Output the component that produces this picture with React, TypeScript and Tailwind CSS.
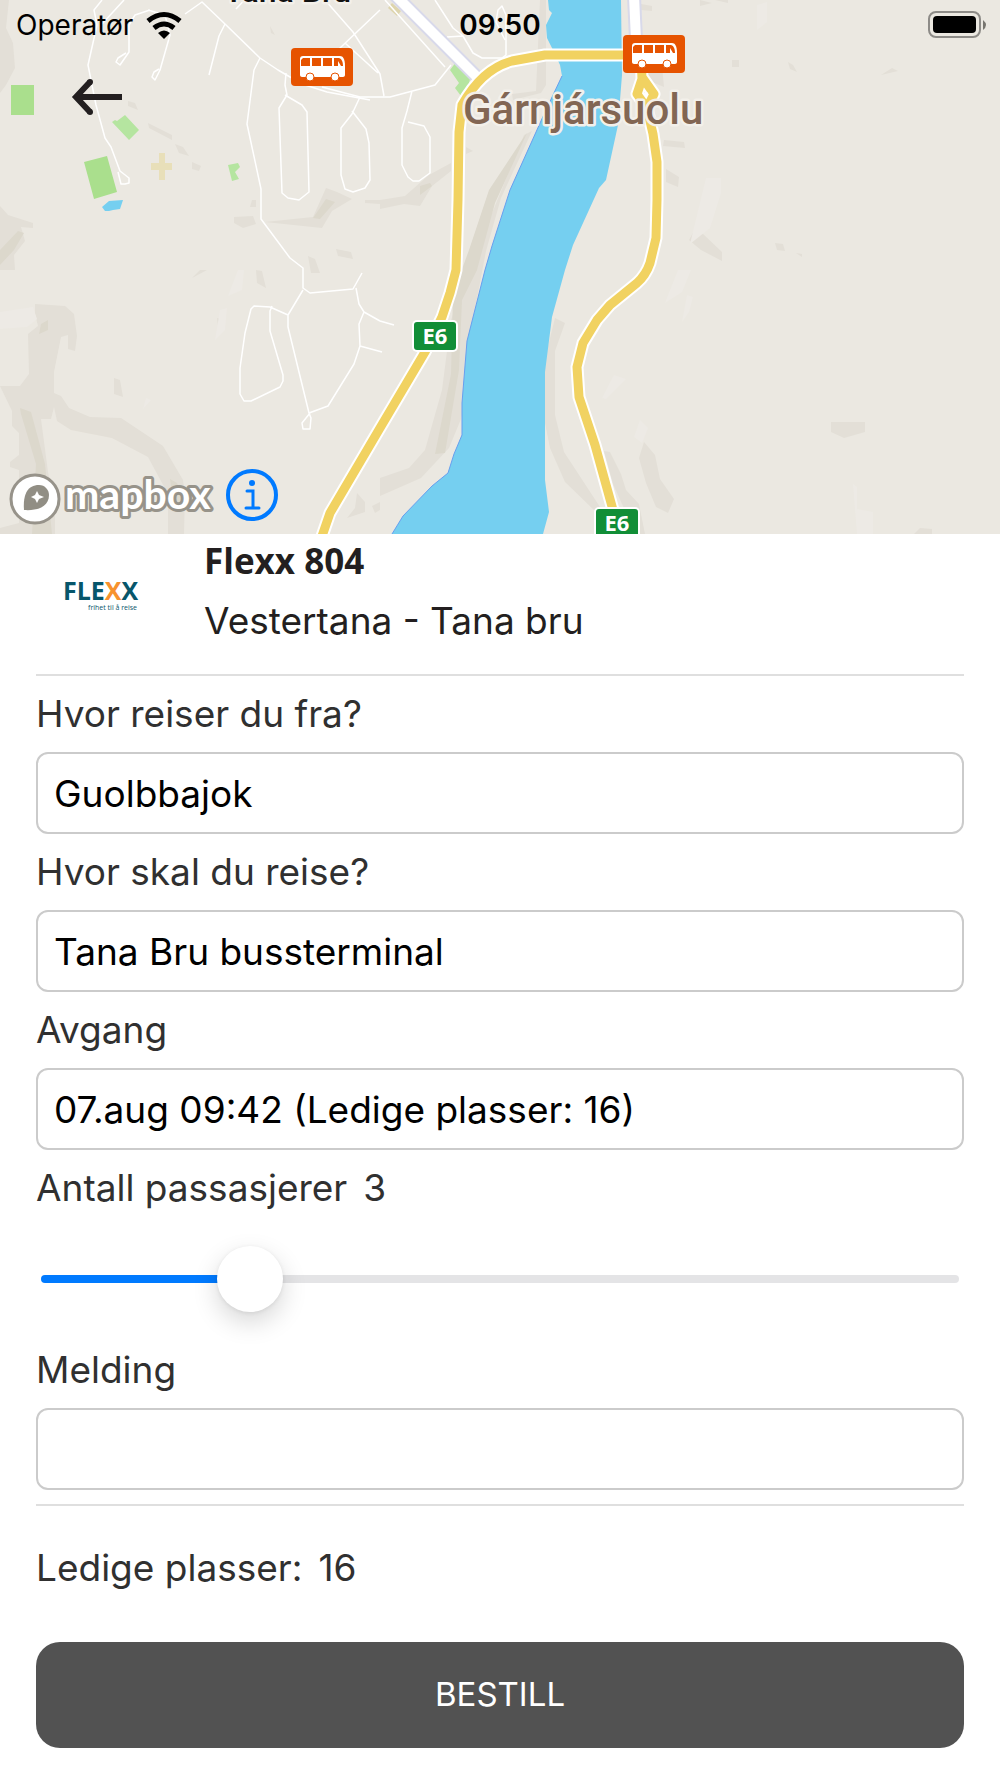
import React, { useState } from 'react';

interface FieldProps {
  id: string;
  label: string;
  value: string;
  onChange: (value: string) => void;
}

const Field: React.FC<FieldProps> = ({ id, label, value, onChange }) => (
  <div className="flex flex-col gap-4">
    <label htmlFor={id} className="leading-[44px]">{label}</label>
    <input
      id={id}
      type="text"
      value={value}
      onChange={(e) => onChange(e.target.value)}
      className="w-full h-[82px] px-4 bg-white text-black border-2 border-[#cbcbcb] rounded-[12px] outline-none focus:border-[#007aff]"
    />
  </div>
);

const BusMarker: React.FC<{ x: number; y: number }> = ({ x, y }) => (
  <g transform={`translate(${x} ${y})`}>
    <rect width="62" height="38" rx="4" fill="#e65300" />
    <path d="M12 8h37c3 0 5 3 5 10v9c0 1-1 2-2 2H11c-1 0-2-1-2-2V11c0-2 1-3 3-3z" fill="#fff" />
    <path d="M12 10h7v8h-9v-6zM21 10h9v8h-9zM32 10h9v8h-9zM43 10h5c3 1 4 4 4 8h-2l-3-5v5h-4z" fill="#e65300" />
    <circle cx="19" cy="29" r="4" fill="#fff" stroke="#e65300" strokeWidth="1" />
    <circle cx="44" cy="29" r="4" fill="#fff" stroke="#e65300" strokeWidth="1" />
  </g>
);

const RoadShield: React.FC<{ x: number; y: number }> = ({ x, y }) => (
  <g transform={`translate(${x} ${y})`}>
    <rect x="-1" y="-1" width="46" height="32" rx="5" fill="#fff" />
    <rect x="1" y="1" width="42" height="28" rx="3" fill="#118e37" />
    <text x="22" y="23" textAnchor="middle" fill="#fff" fontSize="22" fontWeight="700" fontFamily="Open Sans, sans-serif">E6</text>
  </g>
);

const E6_WEST = 'M640 55h-95l-33 6q-30 8-50 44l-3 27-1 68-2 70-6 23-8 24-17 35-45 76-50 85-10 29';
const E6_EAST = 'M641 55l1 24-5 15 10 14 6 26 4 28v38l-1 38-6 25q-4 12-13 20l-27 22-13 15-14 23-6 24 2 30 16 48 18 65M642 77l12 17-7 14';

const MapView: React.FC = () => (
  <svg viewBox="0 0 1000 534" className="block w-full h-auto bg-[#ebe8e1]" role="img" aria-label="Kart">
    {/* Terrain shading */}
    <g fill="#e3dfd7">
      <path d="M0 0h9l-3 28 7 15 2 25-9 17-6 8z" />
      <path d="M0 206l8 9 25 8v5l-12-1 4 14-11 14 1 15H0z" />
      <path d="M35 304l30 2 9 8 3 22-2 15-7-2v-14l-7 2-7 35v21l7 3 8 12 21 9 31 1 42 28 20 34 2 14-1 40h-16v-40l-20-37-36-19-41-8-14-9-3-14-3 12H41l7 53 7 33v29H0v-6l19-5V470l-9-3v-5l9-7v-22l-7-7v-15L0 386h20l9-12-1-40 10-8-3-12z" />
      <path d="M234 217l19-1 3 8-13 4-9-5zM265 222l48-5 13-29 11 4 15 7-20 12-10 17zM365 200h15v4l-15-1zM252 200h4v7h-6zM336 249l15 3 2 7-15-3zM308 256l7 3 5 14h-9z" />
      <path d="M128 101l7 2 3 7-10-4zM148 123l24 12v5l-23-12zM175 144l8 3 6 9-10-3zM192 162l9 4-2 5-7-2zM270 26l5 9-4-2z" />
      <path d="M256 270l6 1 4 17-9-5zM200 270h7l-15 8zM217 318l8 2v5l-7 1zM114 378l6 2 3 17-9-3zM357 493l8 9v10l-18 6 8-10zM372 506l8-4v8l-5 3z" />
      <path d="M380 200l25-4 24-21 22-12v8l-19 15-12 20-16-2-24 5z" />
      <path d="M540 0h6v85l-5 8-28 7-1-6 24-3zM524 135l8-4-31 67-15 53-11 58-6 75-8 35-12 29-28 30-41 18v-18l29-10 16-18 17-60 9-70 30-80z" />
      <path d="M641 4l11 2v5l-11-1zM700 0l12 3-12 3zM715 0h13v3zM732 60h7v7h-7zM788 62l5 3 4 7-7-3zM881 75l11-7 6 3zM664 140l20 2 1 6-22-2zM666 169l13 8-1 10-12-5zM694 231l8 2 20 19v9l-21-11-12-10zM775 243l8 1 2 7-8-1zM796 253l6 1v3z" />
      <path d="M831 422h34v10l-21 6-13-6zM555 318l10 5-10 28v64l9 37 36 55-5 4-30-29-15-34-5-25v-65zM604 451l6 1 11 22 5 16 13 14 6 30h-8l-15-30-9-20zM644 442l11 13 5 24 14 20-6 14-12-6-10-24-7-25zM858 531h7v3h-7zM920 528l12 1v5h-18z" />
      <path d="M634 55h27l3 32-12-5zM466 147l7 4-7 3z" />
    </g>
    <g fill="#dcd8cc">
      <path d="M18 231l6 2-10 17-14 15v-15zM326 199l9 3-15 17-7-1zM20 408l11 4 14 52 7 70H32l4-70-15-50zM170 479l7 4 8 20-12-2zM41 324l7-4v10l-9 4zM420 186l10-3 2 3-12 9z" />
      <path d="M524 137l3-4-32 70-18 67-15 30-3 70-14 83-10 1 16-80 2-80 16-44 20-60z" />
    </g>
    <g fill="#edeae5">
      <path d="M706 178h15v15l-11 35-20 16zM678 270h13l-9 22-17 11zM687 295l6 2-4 15-7 10zM757 5l10-3v20l-10 8zM238 270h6l-2 20-14 6zM614 375l12 4-20 20-4-1zM640 420l8 8-6 15-8-6zM853 484l4 3v22l16 3v22h-16zM220 310l7-2-2 22-10 10zM146 398l5 2-8 9zM0 312l33-5 4 12-10 8-27 2z" />
    </g>

    {/* Parks and ponds */}
    <g fill="#aadf8d">
      <path d="M11 85h23v30H11zM84 162l23-6 10 36-23 7z" />
    </g>
    <g fill="#b5e5a0">
      <path d="M112 122l3-2 2 1 8-6 14 15-10 10zM228 165l10-2 2 4-5 5 4 7-7 2zM456 62l5 6 10 8-4 14-6 6-6-8 4-5-9-13z" />
    </g>
    <path d="M102 207l7-6 14-1-3 9-7 1-4 1h-4z" fill="#75cff0" />
    <path d="M159 153h6v10h7v7h-7v10h-6v-10h-8v-7h8z" fill="#e8dfb9" />
    <path d="M392 3l9 8-4 5-9-8z" fill="#ded5ae" />

    {/* Local streets */}
    <g fill="none" stroke="#fff" strokeWidth="1.5" strokeLinejoin="round">
      <path d="M102 0l-8 10 3 15-9 40 8 40 9 33 6 9 9 24 9 7v5l-4 1h-4l-3-12" />
      <path d="M124 0l-22 24M150 10l-15 5-6 10v27l-9 13-4-3 2-4 8-5M148 10l17 5 5 20-10 35-5 10-3-3 2-5 5-3M185 14l17-12 23 22 35 34 18 12 24 14 25 8 43 8" />
      <path d="M225 24l-6 12-10 39M260 58l-6 12-7 54 14 65v30l29 39 13 10v20l7 5 43-4 9-16M286 73l-1 12 2 10-8 13 3 85 6 5 11 2 10-8-2-80-5-7-17-10M322 87l38 10h30l45-12 16-20M360 97l-8 17-11 14v47l4 14 8 3 12-4 5-8-1-37-3-14-14-18M325 0l28 32 27 42 4 22M380 10l-40 38-18 25M345 43l33 30M236 9l15-16M385 0l60 67M412 91l-5 20-5 17v37l6 12 5 4h6l11-8v-36l-6-11-16-4M435 0l18 28 10 8-16 1M463 36l10 17 9 5h20l4-3V15l-4-9-4 4-2 12 9 18" />
      <path d="M303 290l-15 25v12l21 86 2 5-1 11h-7l-1-6 8-10M309 413l19-7 26-42 6-18-1-22 5-12-5-8-3-16M364 312l16 9M360 346l22 6M288 315l-18-8-16-1-3 3-6 24-5 35v26l4 7h7l29-14 3-6v-6l-13-44v-20l2-5M380 321l14 4" />
    </g>

    {/* River */}
    <path
      d="M548 0l1 10 3 3-6 12 1 13 6 12 7 15 2 11-17 36-35 78-18 56-7 24-18 71-5 62v32l-8 19-6 19-16 13-29 30-11 18h151l6-22-4-32V372l7-55 13-47 8-25 26-57 7-8 12-55 4-50-1-75z"
      fill="#75cff0"
    />
    <path d="M562 76l-17 36-35 78-18 56-7 24-18 71-5 62v32l-8 19-6 19-16 13-29 30-11 18" fill="none" stroke="#679fef" />

    {/* Main roads */}
    <g fill="none" strokeLinejoin="round">
      <path d="M394-6l84 84M634-4l2 44" stroke="#d8d9ea" strokeWidth="14" />
      <path d="M394-6l84 84M634-4l2 44" stroke="#fff" strokeWidth="10" />
      <path d={E6_WEST} stroke="#fff" strokeWidth="13" />
      <path d={E6_EAST} stroke="#fff" strokeWidth="13" />
      <path d={E6_WEST} stroke="#f1d261" strokeWidth="9" />
      <path d={E6_EAST} stroke="#f1d261" strokeWidth="9" />
    </g>
    <circle cx="646" cy="94" r="2" fill="#fff" />

    <RoadShield x={413} y={321} />
    <RoadShield x={595} y={508} />

    <g stroke="#f3f0ea" strokeWidth="5" strokeLinejoin="round" paintOrder="stroke" fontFamily="Roboto, sans-serif">
      <text x="224" y="2" fontSize="32" fill="#111" fontWeight="500">Tana Bru</text>
      <text x="463" y="124" fontSize="42" fill="#826653" fontWeight="500">Gárnjársuolu</text>
    </g>

    <BusMarker x={291} y={48} />
    <BusMarker x={623} y={35} />

    {/* Mapbox attribution */}
    <circle cx="35" cy="499" r="24" fill="#fff" stroke="#97938a" strokeWidth="3" />
    <path d="M24 510c-1-13 2-25 15-25 6 0 10 5 10 10 0 12-12 16-25 15z" fill="#918e84" />
    <path d="M37 491l2 4 5 2-5 2-2 4-2-4-4-2 4-2z" fill="#fff" />
    <text x="65" y="509" fontSize="41" fontWeight="700" fontFamily="Lato, sans-serif" fill="#fff" stroke="#97938a" strokeWidth="6" strokeLinejoin="round" paintOrder="stroke">mapbox</text>
  </svg>
);

const StatusBar: React.FC = () => (
  <div className="grid grid-cols-3 items-center h-[50px] px-4 text-[28px] text-black">
    <div className="flex items-center gap-3">
      <span>Operatør</span>
      <svg width="38" height="28" viewBox="0 0 38 28" aria-label="Wi-Fi">
        <path d="M3 10q16-13 32 0M9 17q10-8 20 0" fill="none" stroke="#000" strokeWidth="5" />
        <path d="M13 22q6-5 12 0l-6 6z" fill="#000" />
      </svg>
    </div>
    <span className="text-center font-semibold">09:50</span>
    <svg className="justify-self-end" width="56" height="28" viewBox="0 0 56 28" aria-label="Batteri" overflow="visible">
      <rect x="1" y="1" width="51" height="25" rx="7" fill="none" stroke="#8d8b87" strokeWidth="2" />
      <rect x="5" y="5" width="43" height="17" rx="4" fill="#000" />
      <path d="M55 9q6 5 0 10z" fill="#77756f" />
    </svg>
  </div>
);

export default function App() {
  const [from, setFrom] = useState('Guolbbajok');
  const [to, setTo] = useState('Tana Bru bussterminal');
  const [departure, setDeparture] = useState('07.aug 09:42 (Ledige plasser: 16)');
  const [message, setMessage] = useState('');
  const [amount, setAmount] = useState(3.1);

  const maxPassengers = 15;
  const filled = (amount / maxPassengers) * 100;

  return (
    <main className="min-h-screen bg-white text-[37px] text-[#303030] font-[Inter,sans-serif]">
      {/* Map with status bar and overlay controls */}
      <section className="relative">
        <MapView />
        <div className="absolute inset-x-0 top-0">
          <StatusBar />
        </div>
        <button type="button" aria-label="Tilbake" className="absolute left-[70px] top-[76px]">
          <svg width="54" height="42" viewBox="0 0 54 42" className="block">
            <path d="M52 21H8M20 6L6 21l14 15" fill="none" stroke="#231f20" strokeWidth="6" />
            <circle cx="20" cy="6" r="3" fill="#231f20" />
            <circle cx="20" cy="36" r="3" fill="#231f20" />
          </svg>
        </button>
        <button type="button" aria-label="Informasjon" className="absolute left-[225px] bottom-[12px]">
          <svg width="54" height="54" viewBox="0 0 54 54" className="block">
            <circle cx="27" cy="27" r="24" fill="none" stroke="#007aff" strokeWidth="4" />
            <circle cx="27" cy="15" r="3" fill="#007aff" />
            <path d="M22 23h6v17M21 40h13" fill="none" stroke="#007aff" strokeWidth="3" strokeLinecap="round" />
          </svg>
        </button>
      </section>

      <form className="px-9 pb-[30px]" onSubmit={(e) => e.preventDefault()}>
        <header className="flex h-[140px] text-[#231f20]">
          <div className="w-[168px] pt-[42px] pl-[27px]">
            <div className="w-[74px] font-[Open_Sans,sans-serif] text-[#07566b]">
              <p className="text-[25px] leading-[28px] font-bold">FLE<span className="text-[#f7922d]">X</span>X</p>
              <p className="text-[7px] leading-[8px] text-right">frihet til å reise</p>
            </div>
          </div>
          <div>
            <h1 className="text-[35px] leading-[54px] font-bold font-[Open_Sans,sans-serif]">Flexx 804</h1>
            <p className="pt-2 leading-[50px]">Vestertana - Tana bru</p>
          </div>
        </header>

        <hr className="border-t-2 border-[#dfdfdf]" />

        <div className="flex flex-col gap-4 pt-4 pb-[14px]">
          <Field id="from" label="Hvor reiser du fra?" value={from} onChange={setFrom} />
          <Field id="to" label="Hvor skal du reise?" value={to} onChange={setTo} />
          <Field id="departure" label="Avgang" value={departure} onChange={setDeparture} />

          <div className="flex flex-col gap-4">
            <label htmlFor="passengers" className="flex gap-4 leading-[44px]">
              <span>Antall passasjerer</span>
              <span>{Math.round(amount)}</span>
            </label>
            <div className="flex items-center h-[106px] px-[5px]">
              <input
                id="passengers"
                type="range"
                min={0}
                max={maxPassengers}
                step={0.1}
                value={amount}
                onChange={(e) => setAmount(Number(e.target.value))}
                style={{ background: `linear-gradient(to right, #007aff ${filled}%, #e4e4e6 ${filled}%)` }}
                className="w-full h-2 appearance-none rounded-full outline-none [&::-webkit-slider-thumb]:appearance-none [&::-webkit-slider-thumb]:size-[66px] [&::-webkit-slider-thumb]:rounded-full [&::-webkit-slider-thumb]:bg-white [&::-webkit-slider-thumb]:shadow-[0_10px_26px_rgba(0,0,0,0.16),0_1px_4px_rgba(0,0,0,0.08)]"
              />
            </div>
          </div>

          <Field id="message" label="Melding" value={message} onChange={setMessage} />
        </div>

        <hr className="border-t-2 border-[#dfdfdf]" />

        <p className="flex gap-4 pt-10 pb-[52px] leading-[44px]">
          <span>Ledige plasser:</span>
          <span>16</span>
        </p>

        <button type="submit" className="w-full h-[106px] rounded-[24px] bg-[#525252] text-white text-[33px]">
          BESTILL
        </button>
      </form>
    </main>
  );
}
